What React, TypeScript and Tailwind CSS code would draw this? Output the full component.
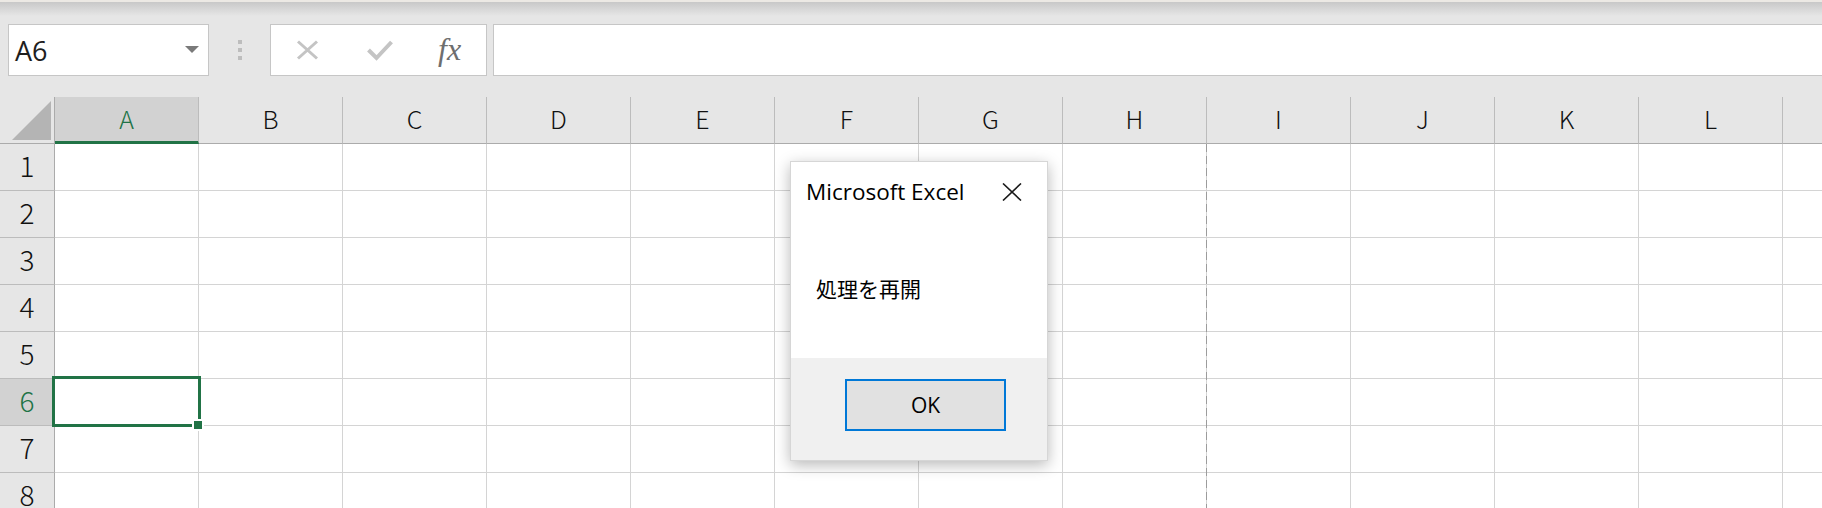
import React from "react";

const COLUMNS = ["A", "B", "C", "D", "E", "F", "G", "H", "I", "J", "K", "L", "M"];
const ROWS = [1, 2, 3, 4, 5, 6, 7, 8];

const ACTIVE_COL = "A";
const ACTIVE_ROW = 6;

function NameBox() {
  return (
    <div className="relative flex h-[52px] w-[201px] shrink-0 items-center border border-[#c6c6c6] bg-white pl-[6px]">
      <span className="font-['Open_Sans',sans-serif] text-[27px] leading-none text-[#1e1e1e]">A6</span>
      <svg className="absolute right-[9px] top-[21px]" width="14" height="7" viewBox="0 0 14 7">
        <path d="M0 0 H14 L7 7 Z" fill="#7a7a7a" />
      </svg>
    </div>
  );
}

function FormulaButtons() {
  return (
    <div className="flex h-[52px] w-[217px] shrink-0 items-center border border-[#c6c6c6] bg-white">
      {/* cancel */}
      <svg className="ml-[25px]" width="23" height="20" viewBox="0 0 23 20">
        <path d="M2 1.5 L21 18.5 M21 1.5 L2 18.5" stroke="#c4c4c4" strokeWidth="3" />
      </svg>
      {/* enter */}
      <svg className="ml-[48px]" width="26" height="21" viewBox="0 0 26 21">
        <path d="M1.5 10 L9.5 18 L24.5 2" stroke="#c4c4c4" strokeWidth="4" fill="none" />
      </svg>
      <span className="ml-[45px] mt-[-2px] font-['Liberation_Serif',serif] text-[32px] italic leading-none text-[#6e6e6e]">
        fx
      </span>
    </div>
  );
}

function Toolbar() {
  return (
    <div className="flex h-[97px] shrink-0 items-start bg-[linear-gradient(to_bottom,#ece9e4_0px,#ece9e4_2px,#c8c8c8_2px,#e6e6e6_16px,#e6e6e6_100%)] pl-2 pt-[24px]">
      <NameBox />
      <div className="flex w-[61px] shrink-0 flex-col items-center gap-[4px] pt-[16px]">
        <span className="h-[4px] w-[4px] bg-[#bdbdbd]" />
        <span className="h-[4px] w-[4px] bg-[#bdbdbd]" />
        <span className="h-[4px] w-[4px] bg-[#bdbdbd]" />
      </div>
      <FormulaButtons />
      <div className="ml-[6px] h-[52px] flex-1 border border-r-0 border-[#c6c6c6] bg-white" />
    </div>
  );
}

function HeaderRow() {
  return (
    <div className="flex h-[47px] shrink-0 bg-[#e6e6e6]">
      <div className="relative w-[55px] shrink-0 border-r border-b border-[#ababab]">
        <svg className="absolute left-[12px] top-[4px]" width="39" height="39" viewBox="0 0 39 39">
          <path d="M39 0 V39 H0 Z" fill="#b4b4b4" />
        </svg>
      </div>
      {COLUMNS.map((c, i) => {
        const active = c === ACTIVE_COL;
        return (
          <div
            key={c}
            className={
              active
                ? "flex w-[144px] shrink-0 items-center justify-center border-r border-b-[3px] border-r-[#bcbcbc] border-b-[#217346] bg-[#d2d2d2] pb-[2px] text-[#217346]"
                : "flex w-[144px] shrink-0 items-center justify-center border-r border-b border-r-[#bcbcbc] border-b-[#ababab] pb-[4px] text-[#111]"
            }
          >
            {/* the last column runs past the window edge */}
            {i < COLUMNS.length - 1 && (
              <span className="font-['Noto_Sans_CJK_JP',sans-serif] text-[25px] font-light leading-none">{c}</span>
            )}
          </div>
        );
      })}
    </div>
  );
}

function GridRow({ n }: { n: number }) {
  const active = n === ACTIVE_ROW;
  return (
    <div className="flex h-[47px] shrink-0">
      <div
        className={
          active
            ? "flex w-[55px] shrink-0 items-center justify-center border-r border-b border-r-[#ababab] border-b-[#bcbcbc] bg-[#d2d2d2] pb-[5px] text-[#217346]"
            : "flex w-[55px] shrink-0 items-center justify-center border-r border-b border-r-[#ababab] border-b-[#bcbcbc] bg-[#e6e6e6] pb-[5px] text-[#111]"
        }
      >
        <span className="font-['Noto_Sans_CJK_JP',sans-serif] text-[28px] font-light leading-none">{n}</span>
      </div>
      {COLUMNS.map((c) => (
        <div key={c} className="w-[144px] shrink-0 border-r border-b border-[#d4d4d4] bg-white" />
      ))}
    </div>
  );
}

function MessageBox() {
  return (
    <div className="absolute left-[790px] top-[161px] flex h-[300px] w-[258px] flex-col border border-[#d6d6d6] shadow-[0_4px_14px_rgba(0,0,0,0.28)]">
      <div className="flex h-[196px] flex-col bg-white">
        <div className="flex h-[60px] items-center justify-between pl-[15px] pr-[25px]">
          <span className="font-['Open_Sans',sans-serif] text-[22.5px] leading-none text-black">Microsoft Excel</span>
          <svg width="20" height="18" viewBox="0 0 20 18">
            <path d="M1 0.5 L19 17.5 M19 0.5 L1 17.5" stroke="#1a1a1a" strokeWidth="1.6" />
          </svg>
        </div>
        <div className="pl-[25px] pt-[56px]">
          <span className="font-['Noto_Sans_CJK_JP',sans-serif] text-[21px] leading-none text-black">処理を再開</span>
        </div>
      </div>
      <div className="flex-1 bg-[#f0f0f0] pl-[54px] pt-[21px]">
        <button className="flex h-[52px] w-[161px] items-center justify-center border-2 border-[#0078d7] bg-[#e1e1e1]">
          <span className="font-['Open_Sans',sans-serif] text-[21px] leading-none text-black">OK</span>
        </button>
      </div>
    </div>
  );
}

export default function App() {
  return (
    <div className="relative flex h-[508px] w-[1822px] flex-col overflow-hidden bg-white">
      <Toolbar />
      <HeaderRow />
      {ROWS.map((n) => (
        <GridRow key={n} n={n} />
      ))}

      {/* page break after column H */}
      <div className="absolute bottom-0 left-[1206px] top-[144px] w-px bg-[repeating-linear-gradient(to_bottom,#9c9c9c_0px,#9c9c9c_8px,transparent_8px,transparent_12px)]" />

      {/* active cell A6 */}
      <div className="absolute left-[52px] top-[376px] h-[51px] w-[149px] border-[3px] border-[#217346]" />
      <div className="absolute left-[192px] top-[419px] h-[12px] w-[12px] border-2 border-white bg-[#217346]" />

      <MessageBox />
    </div>
  );
}
